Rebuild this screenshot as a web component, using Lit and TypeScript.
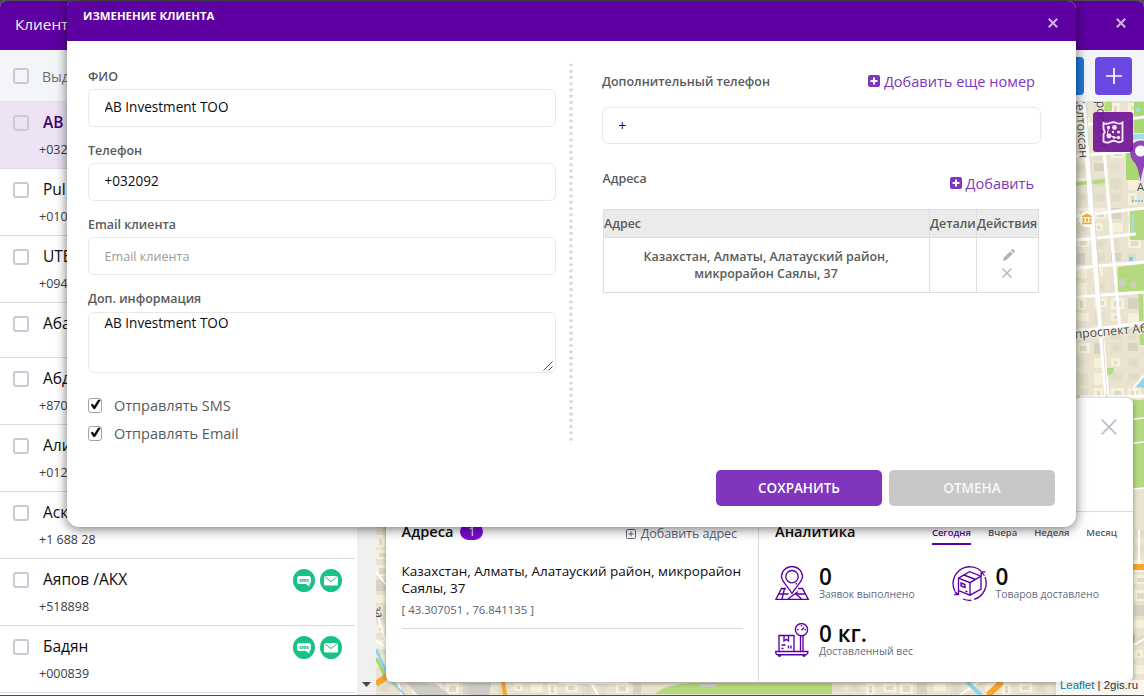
import { LitElement, html, css, svg } from "lit";
import { customElement } from "lit/decorators.js";
import { classMap } from "lit/directives/class-map.js";

interface Client {
  name: string;
  phone: string;
  active?: boolean;
  contact?: boolean;
}

const CLIENTS: Client[] = [
  { name: "AB Investment TOO", phone: "+032092", active: true },
  { name: "Pul", phone: "+010" },
  { name: "UTE", phone: "+094" },
  { name: "Абай", phone: "" },
  { name: "Абдул", phone: "+870" },
  { name: "Алия", phone: "+012" },
  { name: "Аскар", phone: "+1 688 28" },
  { name: "Аяпов /АКХ", phone: "+518898", contact: true },
  { name: "Бадян", phone: "+000839", contact: true },
];

const smsIcon = html`<svg width="22" height="23" viewBox="0 0 22 23">
  <ellipse cx="11" cy="11.5" rx="11" ry="11.5" fill="#19c184" />
  <path d="M6.500 7h9a2.500 2.500 0 0 1 2.500 2.500v3a2.500 2.500 0 0 1-1.500 2.300v2.700l-3.800-2.500H6.500A2.500 2.500 0 0 1 4 12.500v-3A2.500 2.500 0 0 1 6.500 7z" fill="#fff" />
  <text x="11" y="12.800" text-anchor="middle" font-family="Open Sans" font-weight="800" font-size="4.600" fill="#19c184">sms</text>
</svg>`;

const mailIcon = html`<svg width="22" height="23" viewBox="0 0 22 23">
  <ellipse cx="11" cy="11.500" rx="11" ry="11.500" fill="#19c184" />
  <rect x="4" y="7" width="14" height="9.600" rx="1" fill="#fff" />
  <path d="M4.300 7.400l6.700 5.200 6.700-5.200" fill="none" stroke="#19c184" stroke-width="1" />
</svg>`;

const plusSquare = html`<svg width="12" height="12" viewBox="0 0 12 12">
  <rect width="12" height="12" rx="2" fill="#7f35bd" />
  <path d="M6 2.500v7M2.500 6h7" stroke="#fff" stroke-width="2" />
</svg>`;

const closeIcon = html`<svg width="10" height="10" viewBox="0 0 10 10">
  <path d="M.8.8l8.400 8.400M9.200.8L.8 9.200" stroke="#ccb2df" stroke-width="2.100" fill="none" />
</svg>`;

/** Deterministic spread of building footprints over a rectangle of the city. */
const buildings = (x0: number, y0: number, x1: number, y1: number) => {
  const out = [];
  let k = 3;
  for (let y = y0; y < y1; y += 15) {
    for (let x = x0; x < x1; x += 17) {
      k = (k * 37 + 11) % 101;
      const w = 8 + (k % 6);
      const h = 8 + ((k >> 2) % 5);
      const fill = k % 4 === 0 ? "#d8d2c4" : k % 3 === 0 ? "#e3deca" : "#f6f1da";
      out.push(svg`<rect x=${x} y=${y} width=${w} height=${h} fill=${fill}/>`);
      if (k % 2) out.push(svg`<rect x=${x + 3} y=${y + 3} width=${w - 6} height=${h - 5} fill="#dfd9c7"/>`);
    }
  }
  return out;
};

@customElement("city-map")
class CityMap extends LitElement {
  static styles = css`
    :host { display: block; width: 100%; height: 100%; overflow: hidden; }
    .map { display: block; }
  `;

  render() {
    return html`<svg class="map" width="768" height="593" viewBox="376 102 768 593">
      <rect x="376" y="101" width="768" height="594" fill="#e9e3cf" />
      ${buildings(1077, 103, 1144, 398)}
      ${buildings(376, 505, 392, 660)}
      ${buildings(1134, 530, 1144, 680)}
      ${buildings(378, 683, 640, 694)}
      ${buildings(832, 683, 1056, 694)}

      <path d="M1134 101h10v32h-10zM1126 152h13v28h-13z" fill="#a9d873" />
      <path d="M1104 101h8v10h-8z" fill="#b3dc7f" />
      <path d="M1076 182l29-3v4l-29 3zM1130 209l14-2v33h-14zM1118 267l26-3v27l-26 1zM1138 290h5l1 55h-4z" fill="#b4d97e" />
      <path d="M1105 368h9l-1 5-5 3h-4z" fill="#b4d97e" />
      <path d="M1133 400h11v88l-11 1z" fill="#b4d97e" />
      <path d="M1133 134h11v5h-11zM1131 214h3v20h-3zM1136 108h4v4h-4z" fill="#9fdcf0" />
      <path d="M1136 387l8-9v10z" fill="#8fd3ee" />
      <rect x="1129" y="257" width="4" height="4" fill="#74cdf1" />
      <path d="M1132 201h12" stroke="#74cdf1" stroke-width="2" stroke-dasharray="2 1" />
      <path d="M655 694q10-10 40-11h137v11z" fill="#b4d97e" />
      <path d="M700 684h17l-2 3h-14zM406 682l30 2 14 11h-32zM470 683h22l-3 12h-22zM1119 279h6v8h-6zM1131 281h5v7h-5z" fill="#cfcdc8" />

      <g stroke="#fff" fill="none">
        <path d="M1083 101l12 160 12 138" stroke-width="5" />
        <path d="M1104 150l16 180" stroke-width="3" />
        <path d="M1076 126l68-9M1076 156l58-5M1076 216l68-8M1076 240l60-6M1076 268l68-6M1076 297l68-5M1080 397l64-1" stroke-width="3" />
        <path d="M1076 332l68-9" stroke-width="4" />
        <path d="M1136 396l-2-9 10-12M1133 419l11-1M1133 443l11-1M1133 489l11-1" stroke-width="1.500" />
        <path d="M376 610l26 85M376 572l20 25M376 640l24 20" stroke-width="2" />
        <path d="M960 695l20-14M590 681l8 14M558 683h70M1134 645l10-6M1139 530v40" stroke-width="2" />
      </g>
      <path d="M1086 103l12 158 9 138" stroke="#dcd8d0" stroke-width=".8" fill="none" />
      <path d="M376 649l10 23" stroke="#8fd3ee" stroke-width="3" />
      <path d="M376 658l9 18" stroke="#a9d873" stroke-width="3" />
      <path d="M376 684l14-10" stroke="#f6a62c" stroke-width="6" />
      <path d="M391 681l14 14" stroke="#8fd3ee" stroke-width="2" />
      <path d="M503 682l2 13" stroke="#f6a62c" stroke-width="4" />
      <path d="M1133 567h11" stroke="#f6a62c" stroke-width="6" />
      <path d="M1133 643v-10q3 5 0 10z" fill="#f6a62c" />
      <path d="M967 682l14 13" stroke="#8fd3ee" stroke-width="4" />
      <path d="M988 695l14-13" stroke="#f6a62c" stroke-width="6" />

      <g font-family="Open Sans, sans-serif" font-size="11" fill="#45474c" stroke="#f3efe2" stroke-width="2" paint-order="stroke">
        <text transform="translate(1075 94) rotate(86)" font-size="12.300">Желтоксан</text>
        <text transform="translate(1096 93) rotate(87)" font-size="12.500">проспект</text>
        <text transform="translate(1075 338.500) rotate(-5)" font-size="12.200">проспект Абая</text>
        <text x="1137" y="191">А</text>
        <text transform="translate(374 607) rotate(80)">за</text>
      </g>

      <circle cx="1087" cy="219" r="8" fill="#fff" />
      <path d="M1082 217.300v-1.300l5-2.600 5 2.600v1.300zM1082.500 218.300h2v3.500h-2zM1086 218.300h2v3.500h-2zM1089.500 218.300h2v3.500h-2zM1082 222.500h10v1.700h-10z" fill="#f2b03a" />
      <path d="M1140.500 182q-2-14-5.500-19-5-4.500-5-12a10.500 10.500 0 0 1 21 0q0 8-5 12-3.500 5-5.500 19z" fill="#9145bd" />
      <circle cx="1140.500" cy="151" r="5.500" fill="#fff" />
    </svg>`;
  }
}

@customElement("client-list")
class ClientList extends LitElement {
  static styles = css`
    :host { display: flex; flex: none; width: 376px; background: #fff; }
    .rows { width: 357px; padding-right: 2px; box-sizing: border-box; overflow: hidden; background: #fff; }
    .row { display: flex; height: 67px; box-sizing: border-box; border-bottom: 1px solid #d9dae6; padding: 13px 13px 0 13px; }
    .row.short { height: 55px; }
    .row.active { background: #ece4f4; height: 67px; margin-right: -2px; }
    .box { flex: none; width: 16px; height: 16px; box-sizing: border-box; border: 2px solid #c9cad6; border-radius: 3px; background: #fff; }
    .active .box { background: transparent; }
    .text { flex: 1; margin-left: 10px; white-space: nowrap; }
    .name { font-size: 15.500px; line-height: 20px; height: 20px; margin: -3px 0 0 4px; color: #0c0c0c; }
    .active .name { font-weight: 600; color: #3d0070; }
    .phone { font-size: 12.500px; line-height: 18px; margin-top: 9px; color: #3c3d40; }
    .marks { display: flex; gap: 5px; margin-top: -3px; }
    .track { flex: 1; display: flex; align-items: flex-end; justify-content: center; background: #f0f0f0; padding-bottom: 8px; box-sizing: border-box; }
  `;

  render() {
    return html`<div class="rows">
        ${CLIENTS.map(
          (c) => html`<div class=${classMap({ row: true, active: !!c.active, short: !c.phone })}>
            <span class="box"></span>
            <div class="text"><div class="name">${c.name}</div><div class="phone">${c.phone}</div></div>
            ${c.contact ? html`<div class="marks">${smsIcon}${mailIcon}</div>` : ""}
          </div>`
        )}
      </div>
      <div class="track"><svg width="9" height="5" viewBox="0 0 9 5"><path d="M0 0h9L4.500 5z" fill="#4a4a4a" /></svg></div>`;
  }
}

const pinIcon = svg`
  <path d="M17 27.500C13 20.500 6.500 15.500 6.500 10.500a10.500 10 0 0 1 21 0C27.500 15.500 21 20.500 17 27.500z"/>
  <circle cx="17" cy="10.700" r="6.200"/>
  <path d="M11 22.500H6.500L.9 33.400h32.400L27.500 22.500H23M4 28h9.500M20.500 28h9.700M9.500 22.500L7 33M13 33l10-7.500M20.500 27.500l6 5.500"/>
  <path d="M20.800 18.500l1-1.500"/>`;

const boxIcon = svg`
  <path d="M33 11a16.800 16.800 0 0 1-11 22.300M19.500 34.200a17 17 0 0 1-8.500-1.200M2.800 25A16.800 16.800 0 0 1 29 5"/>
  <path d="M33.500 5.800h-4.300v4.200M29.500 6.100l3 3.500M2.300 28.500h4.200v-3.800M6.200 28.500l-3.500-3"/>
  <path d="M6.500 12.200L17.500 5.700 29 10.200v13L18 29.200 6.500 24.500zM6.500 12.200L18 16.700 29 10.200M18 16.700v12.500M12 9l11.500 4.500"/>
  <path d="M9 17l4 1.500v3L9 20zM13.500 25l2 .8"/>`;

const scaleIcon = svg`
  <circle cx="26.500" cy="6.600" r="6.100"/>
  <path d="M26.500 2v1.500M22 6.600h1.500M29.500 6.600H31M26.500 7.200l2.500-2.700M25.500 12.500v16M28 12.500v16"/>
  <path d="M4 28.500V12.500h15v16M9 12.500v5.500l2.300-1.700 2.200 1.700v-5.500M6.500 22h4M6.500 25.500h2M13.500 22.500v3M16 22.500v3"/>
  <path d="M.8 28.500h32v1.700q-1 1.500-2 1.500H3q-1.500 0-2.200-1.500z"/>
  <circle cx="4.500" cy="32.300" r="1"/><circle cx="29" cy="32.300" r="1"/>`;

@customElement("client-card")
class ClientCard extends LitElement {
  static styles = css`
    :host { display: flex; flex-direction: column; background: #fff; border-radius: 6px; box-shadow: 0 1px 5px rgba(0, 0, 0, 0.400); overflow: hidden; }
    .head { height: 92px; flex: none; border-bottom: 1px solid #d9dae2; display: flex; justify-content: flex-end; padding: 21px 16px 0 0; }
    .body { flex: 1; display: flex; }
    .addresses { width: 373px; box-sizing: border-box; border-right: 1px solid #d9dae2; padding: 9px 15px 0 15.500px; }
    .line { display: flex; align-items: center; height: 20px; }
    .title { font-weight: 600; font-size: 14.600px; color: #0c0c0c; }
    .badge { width: 23px; height: 17px; border-radius: 9px; background: #7b0bd3; color: #fff; font-size: 12px; line-height: 18px; text-align: center; margin: 1px 0 0 7px; }
    .add { margin-left: auto; padding-right: 6px; display: flex; align-items: center; gap: 5px; font-size: 12.600px; letter-spacing: -.1px; color: #5c6379; margin-top: 5px; }
    .place { margin-top: 22px; font-size: 13.500px; line-height: 17px; color: #0c0c0c; white-space: nowrap; }
    .coords { margin-top: 4px; font-size: 11.400px; line-height: 17px; color: #59607a; padding-bottom: 10px; border-bottom: 1px solid #d9dae8; }
    .analytics { flex: 1; padding: 9px 16px 0 16px; }
    .tabs { margin-left: auto; display: flex; gap: 17px; font-size: 9.500px; font-weight: 600; line-height: 13px; height: 13px; color: #56575c; margin-top: 3px; }
    .tab.on { color: #5b00a3; border-bottom: 2px solid #5b00a3; height: 17px; }
    .stats { display: grid; grid-template-columns: 176.500px 1fr; margin-top: 25px; row-gap: 19px; }
    .stat { display: flex; gap: 9px; height: 38px; }
    .art { flex: none; fill: none; stroke: #5b00a3; stroke-width: 1.350; }
    .num { font-size: 22.500px; font-weight: 600; line-height: 22px; color: #0a0a0a; }
    .cap { font-size: 10.400px; line-height: 12px; color: #646b84; white-space: nowrap; }
  `;

  private stat(art: unknown, num: string, cap: string) {
    return html`<div class="stat">
      <svg class="art" width="35" height="35" viewBox="0 0 35 35">${art}</svg>
      <div><div class="num">${num}</div><div class="cap">${cap}</div></div>
    </div>`;
  }

  render() {
    return html`<div class="head">
        <svg width="16" height="16" viewBox="0 0 16 16"><path d="M.7.7l14.600 14.600M15.300.7L.7 15.300" stroke="#bcbccb" stroke-width="1.700" /></svg>
      </div>
      <div class="body">
        <div class="addresses">
          <div class="line">
            <span class="title">Адреса</span><span class="badge">1</span>
            <span class="add">
              <svg width="10" height="10" viewBox="0 0 10 10" fill="none" stroke="#5c6379"><rect x=".5" y=".5" width="9" height="9" rx="1" /><path d="M5 2.500v5M2.500 5h5" /></svg>
              Добавить адрес
            </span>
          </div>
          <div class="place">Казахстан, Алматы, Алатауский район, микрорайон<br />Саялы, 37</div>
          <div class="coords">[ 43.307051 , 76.841135 ]</div>
        </div>
        <div class="analytics">
          <div class="line">
            <span class="title">Аналитика</span>
            <div class="tabs"><span class="tab on">Сегодня</span><span class="tab">Вчера</span><span class="tab">Неделя</span><span class="tab">Месяц</span></div>
          </div>
          <div class="stats">
            ${this.stat(pinIcon, "0", "Заявок выполнено")}
            ${this.stat(boxIcon, "0", "Товаров доставлено")}
            ${this.stat(scaleIcon, "0 кг.", "Доставленный вес")}
          </div>
        </div>
      </div>`;
  }
}

@customElement("edit-dialog")
class EditDialog extends LitElement {
  static styles = css`
    :host { display: flex; flex-direction: column; background: #fff; border-radius: 5px 8px 12px 12px; box-shadow: 0 2px 12px rgba(0, 0, 0, 0.550); overflow: hidden; color: #585b5b; }
    .head { height: 40px; flex: none; background: #5d01a2; display: flex; justify-content: space-between; padding: 0 18px 0 16px; box-sizing: border-box; }
    .caption { color: #fff; font-size: 11.400px; font-weight: 700; line-height: 15px; margin-top: 7px; }
    .close { margin-top: 17px; line-height: 0; }
    .columns { display: flex; padding: 22px 35px 0 21px; height: 381px; }
    .left { width: 468px; display: flex; flex-direction: column; }
    .label { font-size: 12.450px; font-weight: 600; line-height: 18px; height: 18px; display: block; }
    .field { display: block; margin: 3px 0 0; width: 100%; height: 38px; box-sizing: border-box; border: 1px solid #e9e9e9; border-radius: 6px; padding: 0 15.500px 2px; font: 13.550px "Open Sans", sans-serif; color: #0c0c0c; background: #fff; outline: none; }
    .field::placeholder { color: #9b9b9b; font-size: 12.600px; }
    .field.empty { padding-bottom: 0; }
    .group { height: 74px; }
    .groups { padding-top: 5px; }
    .areawrap { position: relative; margin-top: 4px; }
    .area { height: 61px; margin: 0; padding: 1px 15.500px; line-height: 19px; resize: none; }
    .grip { position: absolute; right: 3px; bottom: 2px; }
    .check { display: flex; align-items: center; height: 28px; font-size: 14.500px; gap: 12px; }
    .checks { margin-top: 18px; }
    .tick { flex: none; }
    .divider { width: 4px; height: 381px; margin: 0 29px 0 13px; background: radial-gradient(ellipse 2.300px 1.700px at 2px 2px, #dcdcdc 85%, transparent 100%) 0 0 / 4px 6.240px; }
    .right { width: 439px; }
    .bar { display: flex; justify-content: space-between; }
    .bar .label { margin-top: 10px; }
    .link { display: flex; align-items: center; gap: 4px; color: #7f35bd; font-size: 14.550px; line-height: 20px; height: 20px; padding-right: 6px; margin-top: 8px; }
    .extra { height: 37px; margin-top: 16px; padding-bottom: 0; padding-top: 0; }
    .second .label { margin: 26px 0 0 .5px; }
    .second .link { margin-top: 29px; padding-right: 7px; }
    .grid { margin: 16px 0 0 1px; width: 436px; border-collapse: collapse; table-layout: fixed; font-size: 12.450px; font-weight: 600; }
    .grid th { height: 27px; padding: 0; background: #ebebeb; border: 1px solid #dedede; text-align: left; font-weight: 600; line-height: 17px; white-space: nowrap; }
    .grid td { height: 54px; padding: 0 1px 0 0; border: 1px solid #dedede; text-align: center; line-height: 17px; }
    .c1 { width: 326px; }
    .c2 { width: 47px; }
    .acts { display: flex; flex-direction: column; align-items: center; gap: 7px; padding: 0 0 3px 0; }
    .pencil { margin-left: 4px; }
    .foot { display: flex; justify-content: flex-end; gap: 7px; padding: 26px 21px 0 0; }
    .btn { width: 166px; height: 36px; border: 0; border-radius: 5px; background: #7f35bd; color: #fff; font: 600 13.500px "Open Sans", sans-serif; padding: 0; }
    .btn.off { background: #c8c8c8; color: #f7f7f7; }
  `;

  private check(label: string) {
    return html`<div class="check">
      <svg class="tick" width="14" height="15" viewBox="0 0 14 15">
        <rect x=".5" y=".5" width="13" height="14" rx="2.500" fill="#fff" stroke="#a2a2a2" />
        <path d="M3 6.800l1.700-.8 1.500 2.300L10.300 2h2L7 10.700H5.500z" fill="#000" stroke="#000" stroke-width=".5" />
      </svg>${label}
    </div>`;
  }

  private field(label: string, value: string, placeholder = "") {
    return html`<div class="group">
      <label class="label">${label}</label>
      <input class=${classMap({ field: true, empty: !value })} .value=${value} placeholder=${placeholder} />
    </div>`;
  }

  render() {
    return html`<div class="head"><span class="caption">ИЗМЕНЕНИЕ КЛИЕНТА</span><span class="close">${closeIcon}</span></div>
      <div class="columns">
        <div class="left">
          <div class="groups">
            ${this.field("ФИО", "AB Investment TOO")}
            ${this.field("Телефон", "+032092")}
            ${this.field("Email клиента", "", "Email клиента")}
            <label class="label">Доп. информация</label>
            <div class="areawrap">
              <textarea class="field area" .value=${"AB Investment TOO"}></textarea>
              <svg class="grip" width="10" height="10" viewBox="0 0 10 10"><path d="M.5 9.500l9-9M5.500 9.500l4-4" stroke="#4d4d4d" stroke-width="1" /></svg>
            </div>
          </div>
          <div class="checks">${this.check("Отправлять SMS")}${this.check("Отправлять Email")}</div>
        </div>
        <div class="divider"></div>
        <div class="right">
          <div class="bar"><span class="label">Дополнительный телефон</span><span class="link">${plusSquare}Добавить еще номер</span></div>
          <input class="field extra" .value=${"+"} />
          <div class="bar second"><span class="label">Адреса</span><span class="link">${plusSquare}Добавить</span></div>
          <table class="grid">
            <colgroup><col class="c1" /><col class="c2" /><col /></colgroup>
            <tr><th>Адрес</th><th>Детали</th><th>Действия</th></tr>
            <tr>
              <td>Казахстан, Алматы, Алатауский район,<br />микрорайон Саялы, 37</td>
              <td></td>
              <td><div class="acts">
                <svg class="pencil" width="12" height="12" viewBox="0 0 12 12"><path d="M0 12l.8-3.500 6.500-6.300 2.600 2.500-6.500 6.400zM8 1.500l1-1q.8-.8 1.600 0l.9.900q.8.800 0 1.600l-1 1z" fill="#b3b3b3" /></svg>
                <svg width="10" height="10" viewBox="0 0 10 10"><path d="M.5.5l9 9M9.500.5l-9 9" stroke="#b3b3b3" stroke-width="1.400" /></svg>
              </div></td>
            </tr>
          </table>
        </div>
      </div>
      <div class="foot"><button class="btn">СОХРАНИТЬ</button><button class="btn off">ОТМЕНА</button></div>`;
  }
}

@customElement("app-root")
class AppRoot extends LitElement {
  static styles = css`
    :host { display: block; position: relative; width: 1144px; height: 696px; overflow: hidden; background: #4b4d4e; font-family: "Open Sans", sans-serif; box-sizing: border-box; padding: 1px 0; }
    .page { display: flex; flex-direction: column; height: 694px; border-radius: 6px 6px 0 0; overflow: hidden; background: #fff; }
    .top { flex: none; height: 49px; background: #5d01a2; display: flex; align-items: center; justify-content: space-between; padding: 0 18.500px 3px 15px; box-sizing: border-box; color: #f7f1fb; font-size: 15.300px; line-height: 20px; }
    .x { line-height: 0; margin-top: -2px; }
    .tools { flex: none; height: 52px; box-sizing: border-box; background: #f3f5f8; display: flex; align-items: center; padding: 1px 12px 0 13px; border-bottom: 1px solid #dddfe8; }
    .box { width: 16px; height: 16px; box-sizing: border-box; border: 2px solid #c9cad6; border-radius: 3px; }
    .all { margin-left: 13px; font-size: 14px; color: #6c6d71; flex: 1; }
    .btn { width: 37px; height: 38px; border-radius: 4px; display: grid; place-items: center; margin-left: 11px; }
    .blue { background: #1f78dc; }
    .violet { background: #6b48df; }
    .main { flex: 1; display: flex; min-height: 0; }
    .stage { flex: 1; min-width: 0; position: relative; overflow: hidden; }
    .mapbtn { position: absolute; right: 11px; top: 10px; width: 40px; height: 40px; border-radius: 3px; background: rgba(113, 21, 150, 0.920); display: grid; place-items: center; }
    .credit { position: absolute; right: 0; bottom: 0; height: 15px; padding: 0 6px 0 4px; background: rgba(255, 255, 255, 0.700); font: 11.450px/11px "Liberation Sans", sans-serif; color: #333; }
    .leaf { color: #0078a8; }
    .card { position: absolute; left: 10px; top: 296px; width: 747px; height: 284px; }
    .dialog { position: absolute; left: 67px; top: 1px; width: 1009px; height: 526px; }
  `;

  render() {
    return html`<div class="page">
        <div class="top"><span>Клиенты</span><span class="x">${closeIcon}</span></div>
        <div class="tools">
          <span class="box"></span><span class="all">Выделить все</span>
          <span class="btn blue"></span>
          <span class="btn violet"><svg width="16" height="16" viewBox="0 0 16 16"><path d="M8 0v16M0 8h16" stroke="#fff" stroke-width="1.700" /></svg></span>
        </div>
        <div class="main">
          <client-list></client-list>
          <div class="stage">
            <city-map></city-map>
            <div class="mapbtn"><svg width="22" height="24" viewBox="0 0 22 24" fill="none" stroke="#f3e8f5" stroke-width="1.900">
              <path d="M1.500 3q3 1.600 6.500 0 3.500-1.600 6.500 0 3 1.500 6-.5v18.500q-3 2.200-6 .5-3-1.500-6.500.300-3.500 1.700-6.500-.300v-7l1.300-2.500-1.300-3z" />
              <path d="M6.500 8l-1.500 8M9 16l6 2" stroke-width="1" />
              <g fill="#f3e8f5" stroke="none"><circle cx="6.500" cy="7.500" r="1.700" /><circle cx="12.500" cy="7.500" r="2.400" /><circle cx="16.500" cy="12" r="1.500" /><circle cx="11" cy="12" r="1.200" /><circle cx="7" cy="16" r="2.400" /><circle cx="12" cy="17.500" r="1.400" /><circle cx="16.500" cy="17.500" r="1.700" /></g>
            </svg></div>
            <client-card class="card"></client-card>
            <div class="credit"><span class="leaf">Leaflet</span> | 2gis.ru</div>
          </div>
        </div>
      </div>
      <edit-dialog class="dialog"></edit-dialog>`;
  }
}
